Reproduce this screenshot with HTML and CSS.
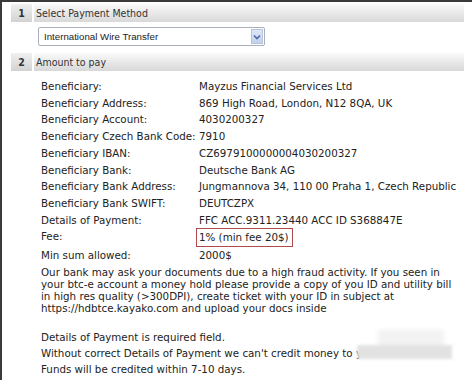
FILE: index.html
```html
<!DOCTYPE html>
<html>
<head>
<meta charset="utf-8">
<link rel="stylesheet" href="styles.css">
</head>
<body>
<div class="frame">
  <div class="step">
    <div class="num">1</div>
    <div class="title">Select Payment Method</div>
  </div>
  <div class="select-wrap">
    <div class="select">
      <span class="select-text">International Wire Transfer</span>
      <span class="select-btn"><svg width="8" height="6" viewBox="0 0 8 6"><path d="M1 1.5 L4 4.5 L7 1.5" fill="none" stroke="#4a6aa8" stroke-width="1.6"/></svg></span>
    </div>
  </div>
  <div class="step">
    <div class="num">2</div>
    <div class="title">Amount to pay</div>
  </div>
  <div class="details">
    <div class="rows">
      <div class="label">Beneficiary:</div><div class="value">Mayzus Financial Services Ltd</div>
      <div class="label">Beneficiary Address:</div><div class="value">869 High Road, London, N12 8QA, UK</div>
      <div class="label">Beneficiary Account:</div><div class="value">4030200327</div>
      <div class="label">Beneficiary Czech Bank Code:</div><div class="value">7910</div>
      <div class="label">Beneficiary IBAN:</div><div class="value">CZ6979100000004030200327</div>
      <div class="label">Beneficiary Bank:</div><div class="value">Deutsche Bank AG</div>
      <div class="label">Beneficiary Bank Address:</div><div class="value">Jungmannova 34, 110 00 Praha 1, Czech Republic</div>
      <div class="label">Beneficiary Bank SWIFT:</div><div class="value">DEUTCZPX</div>
      <div class="label">Details of Payment:</div><div class="value">FFC ACC.9311.23440 ACC ID S368847E</div>
      <div class="label">Fee:</div><div class="value"><span class="fee">1% (min fee 20$)</span></div>
      <div class="label">Min sum allowed:</div><div class="value">2000$</div>
    </div>
    <p class="note">Our bank may ask your documents due to a high fraud activity. If you seen in your btc-e account a money hold please provide a copy of you ID and utility bill in high res quality (&gt;300DPI), create ticket with your ID in subject at https://hdbtce.kayako.com and upload your docs inside</p>
    <div class="info">
      <div>Details of Payment is required field.</div>
      <div>Without correct Details of Payment we can't credit money to y</div>
      <div>Funds will be credited within 7-10 days.</div>
    </div>
  </div>
  <div class="blur-light"></div>
  <div class="blur"></div>
</div>
</body>
</html>
```
FILE: styles.css
```css
html, body {
  margin: 0;
  padding: 0;
  background: #fff;
}
body {
  width: 472px;
  height: 380px;
  overflow: hidden;
  font-family: "DejaVu Sans", "Liberation Sans", sans-serif;
  color: #222;
}
.frame {
  position: relative;
  box-sizing: border-box;
  height: 380px;
  border-top: 2px solid #3a3a3a;
  border-left: 2px solid #3a3a3a;
  padding-top: 2px;
}
.step {
  display: flex;
  gap: 2px;
  margin-left: 9px;
  width: 453px;
  height: 18px;
  font-family: "DejaVu Sans Condensed", "DejaVu Sans", sans-serif;
  font-size: 10.5px;
  line-height: 18px;
}
.num {
  width: 21px;
  text-align: center;
  font-weight: bold;
  color: #333;
  background: linear-gradient(#f0f0f0, #d2d2d2);
}
.title {
  flex: 1;
  padding-left: 2px;
  color: #333;
  background: linear-gradient(#fafafa, #d8d8d8);
}
.select-wrap {
  padding: 5px 0 7px 36px;
}
.select {
  box-sizing: border-box;
  width: 227px;
  height: 19px;
  border: 1px solid #a9b0ba;
  border-radius: 2px;
  display: flex;
  align-items: center;
  justify-content: space-between;
  padding: 0 1px 0 5px;
  font-family: "Liberation Sans", Arial, sans-serif;
  font-size: 9.7px;
  color: #222;
}
.select-btn {
  width: 12px;
  height: 15px;
  background: linear-gradient(#dfe7f6, #c3d0ea);
  border: 1px solid #b7c4de;
  box-sizing: border-box;
  display: flex;
  align-items: center;
  justify-content: center;
}
.details {
  padding: 7px 0 0 39px;
  font-size: 10.3px;
}
.rows {
  display: grid;
  grid-template-columns: 158px 1fr;
  line-height: 16.7px;
}
.fee {
  display: inline-block;
  border: 1px solid #b04a4a;
  line-height: 17px;
  padding: 0 3px 0 2px;
  margin-left: -3px;
}
.note {
  margin: 2px 0 0;
  width: 417px;
  line-height: 12px;
}
.info {
  margin-top: 15px;
  line-height: 16px;
}
.blur-light {
  position: absolute;
  left: 376px;
  top: 328px;
  width: 66px;
  height: 20px;
  background: #f2f2f2;
  filter: blur(2px);
}
.blur {
  position: absolute;
  left: 355px;
  top: 343px;
  width: 95px;
  height: 14px;
  background: #e2e2e2;
  filter: blur(1.5px);
}
```
